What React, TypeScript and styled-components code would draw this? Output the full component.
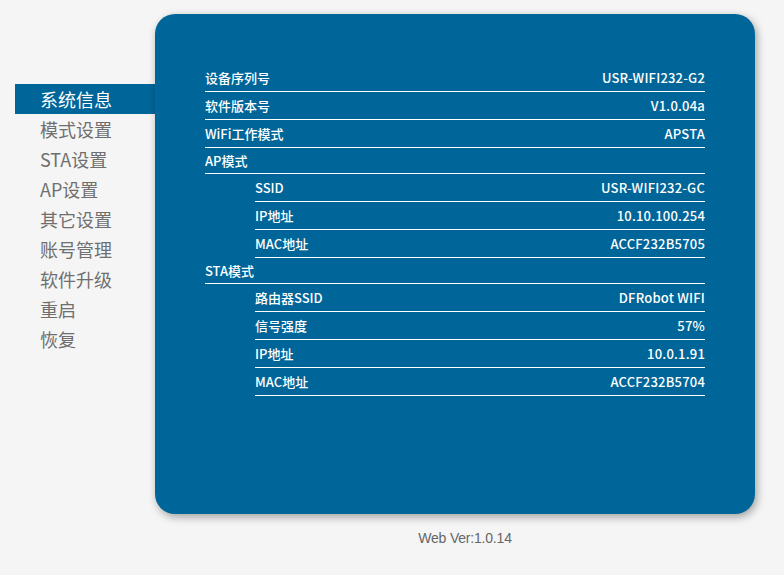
import React, { FC } from 'react';
import styled, { createGlobalStyle } from 'styled-components';

const GlobalStyle = createGlobalStyle`
  html, body {
    margin: 0;
    padding: 0;
    background: #f5f5f5;
  }
  body {
    font-family: "Noto Sans CJK SC", "Liberation Sans", sans-serif;
  }
`;

const Page = styled.div`
  width: 784px;
  height: 575px;
  overflow: hidden;
`;

const Main = styled.div`
  display: flex;
  align-items: flex-start;
  padding-top: 14px;
`;

const Sidebar = styled.ul`
  list-style: none;
  flex-shrink: 0;
  margin: 70px -10px 0 15px;
  padding: 0;
  width: 150px;
`;

const MenuItem = styled.li<{ $active?: boolean }>`
  height: 30px;
  line-height: 30px;
  padding-left: 25px;
  font-size: 18px;
  color: ${p => (p.$active ? '#ffffff' : '#6f6f6f')};
  background: ${p => (p.$active ? '#006699' : 'transparent')};
  cursor: pointer;
`;

const Panel = styled.div`
  position: relative;
  flex-shrink: 0;
  width: 500px;
  height: 450px;
  padding: 50px 50px 0 50px;
  background: #006699;
  border-radius: 20px;
  box-shadow: 2px 3px 8px rgba(0, 0, 0, 0.35);
`;

const Table = styled.div`
  display: flex;
  flex-direction: column;
`;

const Row = styled.div<{ $indent?: boolean; $header?: boolean }>`
  display: flex;
  justify-content: space-between;
  align-items: center;
  height: ${p => (p.$header ? '25px' : '27px')};
  margin-left: ${p => (p.$indent ? '50px' : '0')};
  border-bottom: 1px solid #ffffff;
  color: #ffffff;
  font-size: 13px;
  font-weight: 500;
`;

const Label = styled.span``;

const Value = styled.span`
  text-align: right;
  letter-spacing: 0.2px;
`;

const Footer = styled.div`
  margin: 16px 0 0 146px;
  text-align: center;
  font-family: "Liberation Sans", Arial, sans-serif;
  font-size: 14px;
  color: #666666;
  letter-spacing: -0.2px;
`;

const menu = ['系统信息', '模式设置', 'STA设置', 'AP设置', '其它设置', '账号管理', '软件升级', '重启', '恢复'];

type Item = { label: string; value?: string; indent?: boolean; header?: boolean };

const rows: Item[] = [
  { label: '设备序列号', value: 'USR-WIFI232-G2' },
  { label: '软件版本号', value: 'V1.0.04a' },
  { label: 'WiFi工作模式', value: 'APSTA' },
  { label: 'AP模式', header: true },
  { label: 'SSID', value: 'USR-WIFI232-GC', indent: true },
  { label: 'IP地址', value: '10.10.100.254', indent: true },
  { label: 'MAC地址', value: 'ACCF232B5705', indent: true },
  { label: 'STA模式', header: true },
  { label: '路由器SSID', value: 'DFRobot WIFI', indent: true },
  { label: '信号强度', value: '57%', indent: true },
  { label: 'IP地址', value: '10.0.1.91', indent: true },
  { label: 'MAC地址', value: 'ACCF232B5704', indent: true },
];

const App: FC = () => (
  <Page>
    <GlobalStyle />
    <Main>
      <Sidebar>
        {menu.map((m, i) => (
          <MenuItem key={m} $active={i === 0}>
            {m}
          </MenuItem>
        ))}
      </Sidebar>
      <Panel>
        <Table>
          {rows.map((r, i) => (
            <Row key={i} $indent={r.indent} $header={r.header}>
              <Label>{r.label}</Label>
              {r.value ? <Value>{r.value}</Value> : null}
            </Row>
          ))}
        </Table>
      </Panel>
    </Main>
    <Footer>Web Ver:1.0.14</Footer>
  </Page>
);

export default App;
